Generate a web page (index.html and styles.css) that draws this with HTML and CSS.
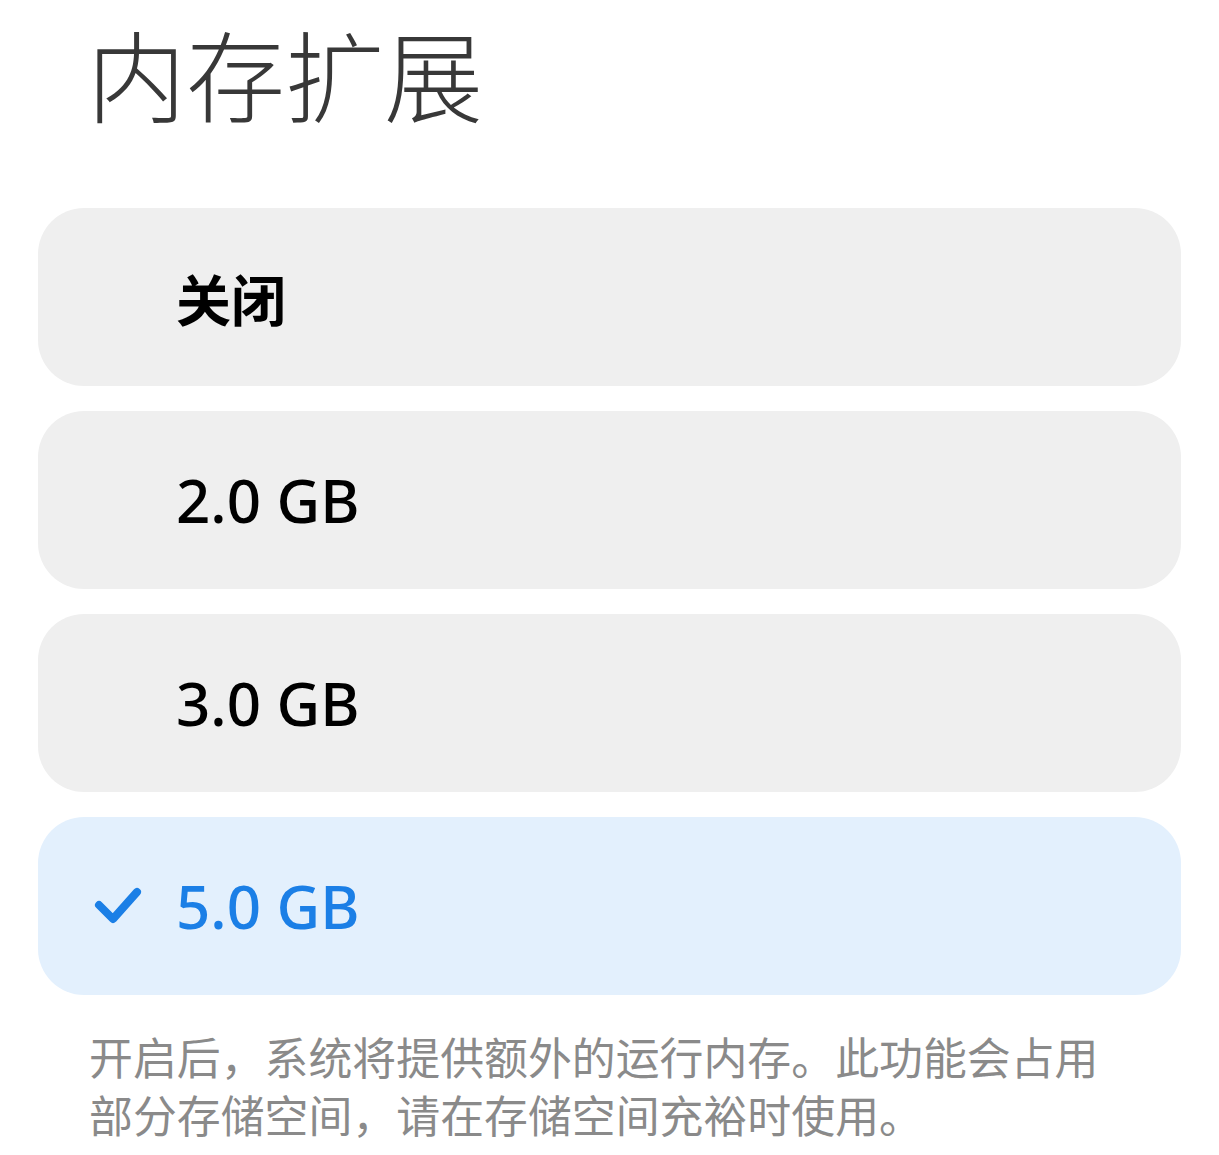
FILE: index.html
```html
<!DOCTYPE html>
<html lang="zh-CN">
<head>
  <meta charset="UTF-8">
  <meta name="viewport" content="width=device-width, initial-scale=1.0">
  <title>内存扩展</title>
  <link rel="stylesheet" href="styles.css">
</head>
<body>

  <div class="page">
    <h1 class="title">内存扩展</h1>

    <ul class="options">
      <li class="option">
        <span class="check"></span>
        <span class="label cjk">关闭</span>
      </li>
      <li class="option">
        <span class="check"></span>
        <span class="label">2.0 GB</span>
      </li>
      <li class="option">
        <span class="check"></span>
        <span class="label">3.0 GB</span>
      </li>
      <li class="option selected">
        <span class="check">
          <svg width="52" height="44" viewBox="0 0 52 44">
            <polyline points="6,21 20,35 44,8" fill="none" stroke="currentColor" stroke-width="8" stroke-linecap="round" stroke-linejoin="round"/>
          </svg>
        </span>
        <span class="label">5.0 GB</span>
      </li>
    </ul>

    <p class="note">开启后，系统将提供额外的运行内存。此功能会占用部分存储空间，请在存储空间充裕时使用。</p>
  </div>

</body>
</html>
```

FILE: styles.css
```css
body {
  margin: 0;
  padding: 0;
  background-color: #ffffff;
  font-family: "Noto Sans", "Noto Sans CJK SC", sans-serif;
}

.page {
  padding: 0 38px;
}

.title {
  margin: 0 0 0 49px;
  font-family: "Noto Sans CJK SC", sans-serif;
  font-size: 99px;
  font-weight: 300;
  line-height: 144px;
  color: #383838;
}

.options {
  list-style: none;
  margin: 64px 0 0 0;
  padding: 0;
  display: flex;
  flex-direction: column;
  gap: 25px;
}

.option {
  height: 178px;
  border-radius: 46px;
  background-color: #efefef;
  display: flex;
  align-items: center;
  padding-left: 54px;
  color: #000000;
}

.option.selected {
  background-color: #e3f0fd;
  color: #1b7fe6;
}

.check {
  width: 84px;
  display: flex;
  align-items: center;
}

.check svg {
  display: block;
  margin-left: 1px;
}

.label {
  font-size: 60px;
  font-weight: 500;
  line-height: 1;
}

.label.cjk {
  font-family: "Noto Sans CJK SC", sans-serif;
  font-size: 55px;
  font-weight: 700;
}

.note {
  margin: 32px 46px 0 51px;
  font-family: "Noto Sans CJK SC", sans-serif;
  font-size: 43.9px;
  line-height: 58px;
  color: #8a8a8a;
}
```
